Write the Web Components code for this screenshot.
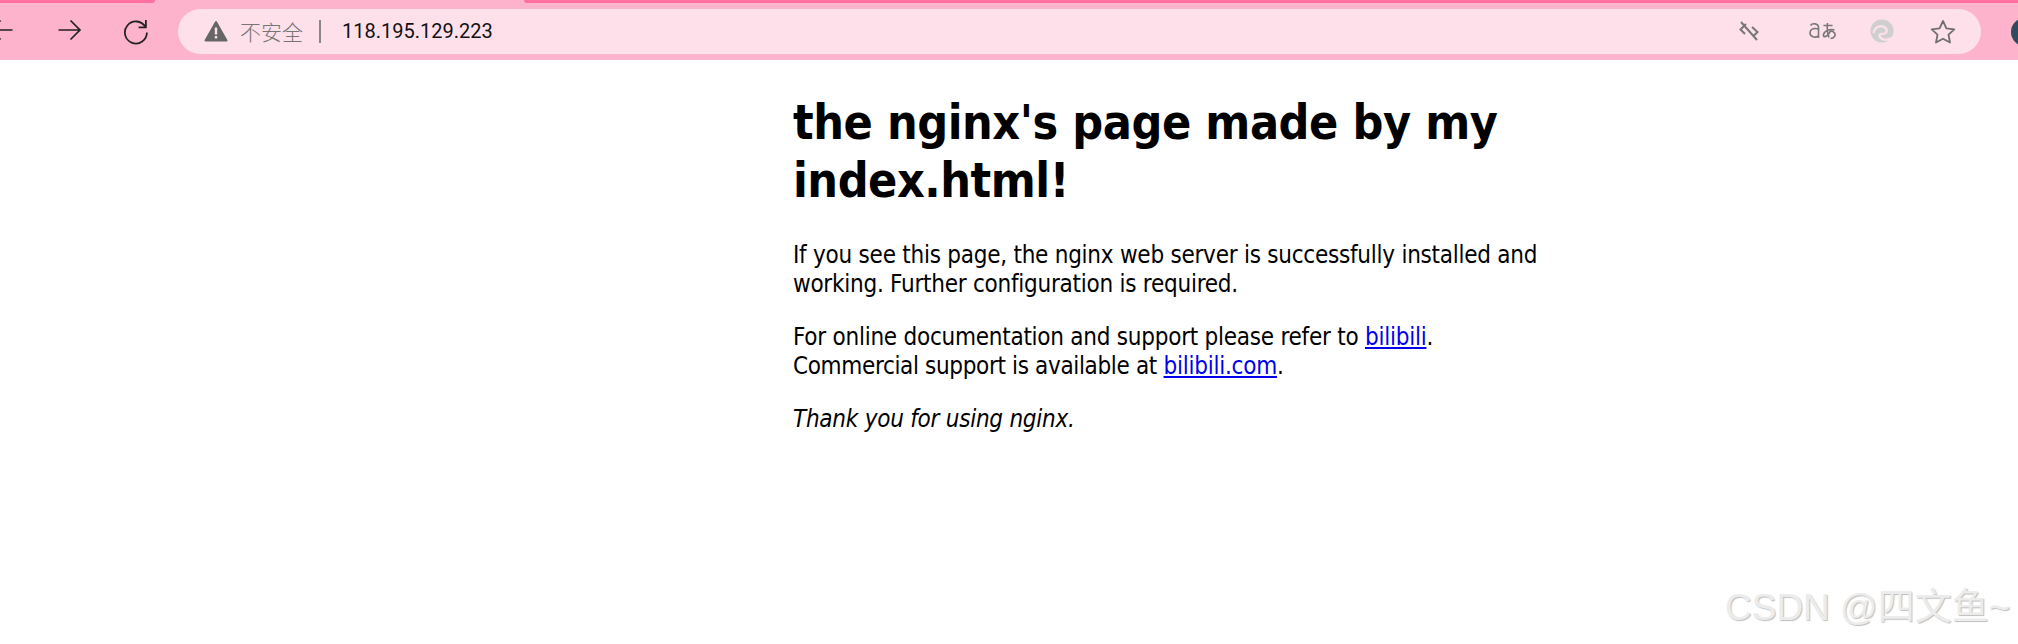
<!DOCTYPE html>
<html lang="en">
<head>
<meta charset="utf-8">
<title>nginx</title>
<style>
  html, body { margin: 0; height: 100%; background: #fff; overflow: hidden; }
  body { display: flex; flex-direction: column; font-family: "DejaVu Sans Condensed", "DejaVu Sans", sans-serif; }
</style>
</head>
<body>
<browser-bar address="118.195.129.223" warning="不安全"></browser-bar>
<nginx-page>
  <h1 slot="title">the nginx's page made by my index.html!</h1>
  <p>If you see this page, the nginx web server is successfully installed and working. Further configuration is required.</p>
  <p>For online documentation and support please refer to <a href="#">bilibili</a>.<br><span style="letter-spacing:-0.35px">Commercial support is available at</span> <a href="#">bilibili.com</a>.</p>
  <p><em>Thank you for using nginx.</em></p>
</nginx-page>
<water-mark>CSDN @四文鱼~</water-mark>

<script>
class BrowserBar extends HTMLElement {
  constructor() {
    super();
    this.attachShadow({ mode: 'open' });
    this.shadowRoot.innerHTML = `
      <style>
        :host {
          display: block;
          position: relative;
          height: 60px;
          flex: none;
          background: #feb3cc;
          border-bottom: 1px solid #f5b6cb;
          overflow: hidden;
          box-sizing: border-box;
        }
        .tabs {
          display: flex;
          justify-content: space-between;
          height: 3px;
        }
        .tabs i { display: block; height: 3px; background: #ff6f9f; }
        .tabs i:first-child { width: 155px; border-radius: 0 0 6px 0; }
        .tabs i:last-child { width: 1494px; border-radius: 0 0 0 6px; }
        .row {
          display: flex;
          align-items: center;
          height: 44px;
          margin-top: 6px;
          margin-left: -11px;
        }
        .nav { display: flex; width: 189px; flex: none; }
        .nav svg { display: block; }
        .omni {
          flex: none;
          width: 1803px;
          height: 45px;
          border-radius: 23px;
          background: #fde0ea;
          display: flex;
          align-items: center;
          font: 20px "Roboto", "Noto Sans CJK SC", sans-serif;
          padding-left: 26px;
          box-sizing: border-box;
        }
        .warn { color: #757575; font-family: "Noto Sans CJK SC", sans-serif; font-weight: 300; margin-left: 12px; font-size: 21px; }
        .sep { width: 2px; height: 23px; background: #8c8489; margin: 0 21px 0 16px; }
        .addr { color: #111; }
        .tools { margin-left: auto; display: flex; align-items: center; }
        .avatar { position: absolute; left: 2011px; top: 18px; }
      </style>
      <div class="tabs"><i></i><i></i></div>
      <div class="row">
        <div class="nav">
          <svg width="25" height="24" viewBox="0 0 24 24" fill="none" stroke="#222" stroke-width="1.7" style="margin-right:43px"><path d="M23 12H1.500M11 2.500L1.500 12l9.500 9.500"/></svg>
          <svg width="25" height="24" viewBox="0 0 24 24" fill="none" stroke="#222" stroke-width="1.7" style="margin-right:41px"><path d="M1 12h21.500M13 2.500l9.500 9.500-9.500 9.500"/></svg>
          <svg width="25" height="27" viewBox="0 0 24 26" fill="none" stroke="#222" stroke-width="1.7"><path d="M21.500 8.500A10.600 10.600 0 1 0 23 14"/><path d="M22 2v7h-7"/></svg>
        </div>
        <div class="omni">
          <svg width="24" height="22" viewBox="0 0 24 22"><path fill="#666" stroke="#666" stroke-width="2" stroke-linejoin="round" d="M12 2L1.500 20.500h21z"/><path stroke="#fde0ea" stroke-width="2.400" d="M12 7.500v7"/><path stroke="#fde0ea" stroke-width="2.400" d="M12 16v2.400"/></svg>
          <span class="warn">${this.getAttribute('warning')}</span>
          <span class="sep"></span>
          <span class="addr">${this.getAttribute('address')}</span>
          <div class="tools">
            <svg width="20" height="20" viewBox="0 0 20 20" fill="none" stroke="#777" stroke-width="2" style="margin-right:50px"><path d="M7 3L1.500 8.500 6 13M13 6l5.500 5L14 15.500M2 1l16 18"/></svg>
            <svg width="27" height="18" viewBox="0 0 27 18" fill="none" stroke="#777" stroke-width="1.6" style="margin-right:34px"><path d="M1.500 3.500C3 1 9.500 1 9.500 5.500V16M9.500 7C4 5.500 1 7.500 1 11s5 5.500 8.500 3"/><path d="M14.500 3.500h9M18.500 1c-.5 5-.5 10 1.500 14.500M25.500 8c-4-1.500-10 .5-11 4.500-.8 3.500 4 3 7-3.500 4 .5 5.500 3 4 5.500-1 1.500-3 2-4 2"/></svg>
            <svg width="24" height="24" viewBox="0 0 24 24" style="margin-right:36px"><circle cx="12" cy="12" r="11.500" fill="#cfcfcf"/><path d="M3.500 14C5 7 12 5.500 15.500 9c2 2 1.500 4.500-.5 5.500-2.500 1-5.500-.5-5.500 2 0 3 6 6.500 13.500 2" fill="none" stroke="#fde0ea" stroke-width="2.400"/></svg>
            <svg width="26" height="25" viewBox="0 0 26 25" fill="none" stroke="#6f6f6f" stroke-width="1.8" stroke-linejoin="round" style="margin-right:25px"><path d="M13 2l3.400 7.300 7.900 1-5.800 5.400 1.500 7.800L13 19.700l-7 3.800 1.500-7.800L1.700 10.300l7.900-1z"/></svg>
          </div>
        </div>
      </div>
      <svg class="avatar" width="28" height="28" viewBox="0 0 28 28"><circle cx="14" cy="14" r="14" fill="#2d4a5e"/><circle cx="14" cy="13" r="7" fill="#fff"/></svg>
    `;
  }
}

class NginxPage extends HTMLElement {
  constructor() {
    super();
    this.attachShadow({ mode: 'open' });
    this.shadowRoot.innerHTML = `
      <style>
        :host {
          display: block;
          flex: 1;
          padding-left: 793px;
          font-size: 24px;
          line-height: 29px;
          letter-spacing: -0.25px;
          color: #000;
        }
        .col { width: 770px; }
        ::slotted(h1) { font-size: 48px; line-height: 58px; font-weight: bold; margin: 33px 0 32px; letter-spacing: -0.45px; }
        ::slotted(p) { margin: 24px 0; }
      </style>
      <div class="col"><slot name="title"></slot><slot></slot></div>
    `;
  }
}

class WaterMark extends HTMLElement {
  constructor() {
    super();
    this.attachShadow({ mode: 'open' });
    this.shadowRoot.innerHTML = `
      <style>
        :host {
          position: absolute;
          left: 1725px;
          top: 577px;
          white-space: nowrap;
          font: 37px "Liberation Sans", "Noto Sans CJK SC", sans-serif;
          color: #ececec;
          text-shadow: 1px 1px 1px #bdbdbd;
        }
      </style>
      <slot></slot>
    `;
  }
}

customElements.define('browser-bar', BrowserBar);
customElements.define('nginx-page', NginxPage);
customElements.define('water-mark', WaterMark);
</script>
</body>
</html>
